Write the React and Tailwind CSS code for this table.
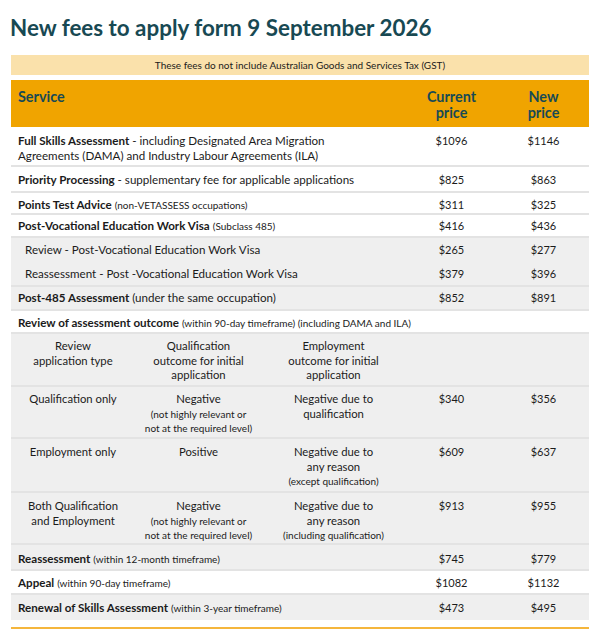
import React from "react";

const F = { fontFamily: "Lato, 'Noto Sans', sans-serif" };

function Row({ gray, children, cur, nw, h, pt, border = true }) {
  return (
    <div className={`grid grid-cols-[394px_93px_91px] ${h} ${pt} ${border ? "border-b-2 border-[#e3e3e3]" : ""} ${gray ? "bg-[#efefef]" : "bg-white"}`}>
      <div className="pl-[7px] leading-[15px] text-[11.6px] whitespace-nowrap">{children}</div>
      <div className="text-center leading-[15px]">{cur}</div>
      <div className="text-center leading-[15px]">{nw}</div>
    </div>
  );
}

function SubRow({ a, b, c, cur, nw, h, pt }) {
  return (
    <div className={`grid grid-cols-[124px_127px_143px_93px_91px] ${h} ${pt} border-b-2 border-[#e3e3e3] bg-[#efefef] text-center leading-[14.5px]`}>
      <div className="text-[11.3px]">{a}</div>
      <div className="text-[11.3px]">{b}</div>
      <div className="text-[11.3px]">{c}</div>
      <div>{cur}</div>
      <div>{nw}</div>
    </div>
  );
}

export default function App() {
  return (
    <div className="w-[600px] h-[636px] bg-white text-[#1b1b1b] text-[11px]" style={F}>
      <div className="px-[10px] pt-[14px]">
        <h1 className="text-[22.4px] font-bold text-[#184953] leading-[28px]">
          New fees to apply form 9 September 2026
        </h1>
      </div>
      <div className="mx-[11px] mt-[13px]">
        <div className="bg-[#fae1ab] text-center text-[10px] leading-[20px]">
          These fees do not include Australian Goods and Services Tax (GST)
        </div>
        <div className="mt-[5px] bg-[#f0a400] grid grid-cols-[394px_93px_91px] h-[47px] text-[14.4px] font-bold text-[#174a55] leading-[16px]">
          <div className="pl-[7px] pt-[9px]">Service</div>
          <div className="text-center pt-[9px]">Current<br />price</div>
          <div className="text-center pt-[9px]">New<br />price</div>
        </div>
        <Row cur="$1096" nw="$1146" h="h-[40px]" pt="pt-[6px]">
          <b>Full Skills Assessment</b> - including Designated Area Migration<br />
          Agreements (DAMA) and Industry Labour Agreements (ILA)
        </Row>
        <Row cur="$825" nw="$863" h="h-[26px]" pt="pt-[5px]">
          <b>Priority Processing</b> - supplementary fee for applicable applications
        </Row>
        <Row cur="$311" nw="$325" h="h-[22px]" pt="pt-[4px]">
          <b>Points Test Advice</b> <span className="text-[10px]">(non-VETASSESS occupations)</span>
        </Row>
        <Row cur="$416" nw="$436" h="h-[23px]" pt="pt-[3px]">
          <b>Post-Vocational Education Work Visa</b> <span className="text-[10px]">(Subclass 485)</span>
        </Row>
        <Row gray cur="$265" nw="$277" h="h-[24px]" pt="pt-[4px]" border={false}>
          <span className="pl-[7px]">Review - Post-Vocational Education Work Visa</span>
        </Row>
        <Row gray cur="$379" nw="$396" h="h-[25px]" pt="pt-[4px]">
          <span className="pl-[7px]">Reassessment - Post -Vocational Education Work Visa</span>
        </Row>
        <Row gray cur="$852" nw="$891" h="h-[24px]" pt="pt-[3px]">
          <b>Post-485 Assessment</b> (under the same occupation)
        </Row>
        <Row cur="" nw="" h="h-[23px]" pt="pt-[4px]">
          <b>Review of assessment outcome</b> <span className="text-[10px]">(within 90-day timeframe) (including DAMA and ILA)</span>
        </Row>
        <SubRow
          h="h-[53px]"
          pt="pt-[5px]"
          a={<>Review<br />application type</>}
          b={<>Qualification<br />outcome for initial<br />application</>}
          c={<>Employment<br />outcome for initial<br />application</>}
          cur=""
          nw=""
        />
        <SubRow
          h="h-[52px]"
          pt="pt-[5px]"
          a="Qualification only"
          b={<>Negative<br /><span className="text-[10px]">(not highly relevant or<br />not at the required level)</span></>}
          c={<>Negative due to<br />qualification</>}
          cur="$340"
          nw="$356"
        />
        <SubRow
          h="h-[54px]"
          pt="pt-[6px]"
          a="Employment only"
          b="Positive"
          c={<>Negative due to<br />any reason<br /><span className="text-[10px]">(except qualification)</span></>}
          cur="$609"
          nw="$637"
        />
        <SubRow
          h="h-[52px]"
          pt="pt-[6px]"
          a={<>Both Qualification<br />and Employment</>}
          b={<>Negative<br /><span className="text-[10px]">(not highly relevant or<br />not at the required level)</span></>}
          c={<>Negative due to<br />any reason<br /><span className="text-[10px]">(including qualification)</span></>}
          cur="$913"
          nw="$955"
        />
        <Row gray cur="$745" nw="$779" h="h-[26px]" pt="pt-[6px]">
          <b>Reassessment</b> <span className="text-[10px]">(within 12-month timeframe)</span>
        </Row>
        <Row cur="$1082" nw="$1132" h="h-[24px]" pt="pt-[4px]">
          <b>Appeal</b> <span className="text-[10px]">(within 90-day timeframe)</span>
        </Row>
        <Row gray cur="$473" nw="$495" h="h-[25px]" pt="pt-[5px]" border={false}>
          <b>Renewal of Skills Assessment</b> <span className="text-[10px]">(within 3-year timeframe)</span>
        </Row>
        <div className="mt-[7px] h-[2px] bg-[#f5b63c]" />
      </div>
    </div>
  );
}
